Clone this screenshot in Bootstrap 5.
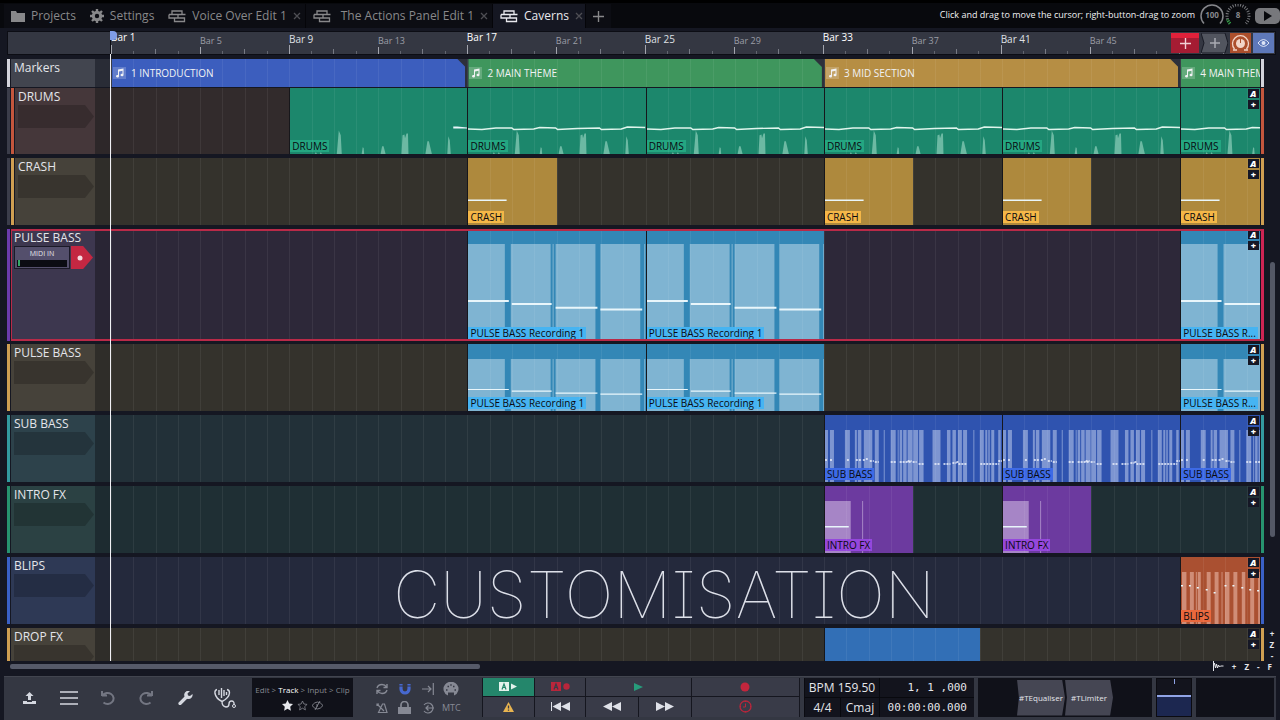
<!DOCTYPE html>
<html lang="en">
<head>
<meta charset="utf-8">
<meta name="viewport" content="width=device-width, initial-scale=1">
<title>Caverns</title>
<link href="https://cdn.jsdelivr.net/npm/bootstrap@5.3.0/dist/css/bootstrap.min.css" rel="stylesheet">
<style>
  :root { --bars: 51.57; --bar: calc(100% / var(--bars)); }
  body { background: #151722; color: #e4e5ea; font-family: "Open Sans", "Noto Sans", sans-serif; font-size: 12px; line-height: 16px; }
  button { color: inherit; font-family: inherit; }
  .btn { --bs-btn-color: inherit; --bs-btn-border-radius: 0; --bs-btn-font-size: 12px; --bs-btn-line-height: 16px; }
  svg { display: block; fill: none; stroke: currentColor; flex: none; }

  /* document tabs */
  .tabbar { background: #08090d; height: 28px; padding-top: 1px; border-top: 3px solid #000; }
  .doc-tab { color: #88888a; background: #0c0d13; border-right: 1px solid #050509; gap: 6px; font-size: 12px; height: 24px; padding: 0 7px; }
  .doc-tab.editor { padding-right: 4px; }
  .doc-tab.active { background: #151722; color: #e9e9ee; padding-right: 2px; }
  .doc-tab .btn { color: #4e4e54; }
  .hint { font-size: 9px; line-height: 22px; color: #f0f0f2; }
  .dial { width: 26px; }
  .dial text { font-size: 8px; font-weight: 700; fill: #87888c; stroke: none; text-anchor: middle; }

  /* ruler */
  .ruler { margin: 3px 4px 4px 7px; height: 24px; background: #343742; border: 1px solid #0c0d14; }
  .ruler-head { width: 103px; border-right: 1px solid #0c0d14; }
  .lane { display: grid; grid-template-columns: repeat(51, minmax(0, 1fr)) minmax(0, .57fr); grid-template-rows: 100%; }
  .scale-end { width: 17px; }
  .ticks { background:
      repeating-linear-gradient(90deg, #777a84 0 1px, transparent 1px calc(var(--bar) * 2)) 0 100% / 100% 5px no-repeat,
      repeating-linear-gradient(90deg, #62656f 0 1px, transparent 1px var(--bar)) 0 100% / 100% 3px no-repeat; }
  .ticks span { position: relative; white-space: nowrap; font-size: 9px; line-height: 12px; color: #9b9da6; padding-top: 3px; }
  .ticks span::after { content: ""; position: absolute; left: 0; bottom: 0; width: 1px; height: 7px; background: #a2a4ad; }
  .ticks .mid { font-size: 10px; color: #dfe0e5; padding-top: 1px; }
  .ticks .big { font-size: 10px; line-height: 10px; color: #fff; padding-top: 0; }
  .ticks .mid::after, .ticks .big::after { height: 9px; }
  .ruler-tools { right: 1px; top: 1px; gap: 2px; }
  .ruler-tools .btn { height: 20px; width: 21px; }
  .ruler-tools .add-track { background: linear-gradient(#e0213a 5px, #a51c33 5px); width: 28px; color: #f2d0d6; }

  /* tracks */
  .workspace, .tracks, .track-list { min-height: 0; }
  .tracks { margin-left: 7px; }
  .track { height: 67px; margin-bottom: 4px; flex: none; position: relative; }
  .track.markers { height: 28px; margin-bottom: 1px; }
  .track.drums { height: 66px; }
  .track.selected { height: 112px; margin-bottom: 3px; }
  .selected::after { content: ""; position: absolute; inset: 0 0 0 4px; border: 2px solid #b92a48; border-left-width: 1px; border-right: 3px solid #cf2554; pointer-events: none; z-index: 2; }
  .strip { width: 3px; margin-right: 1px; background: var(--tint); }
  .strip.group { background: #3b3d4a; }
  .strip.end { margin: 0 0 0 1px; }
  .track-head { width: 84px; background: var(--head); font-size: 12px; line-height: 17px; padding-left: 3px; white-space: nowrap; }
  .nested .track-head { width: 80px; }
  .side { width: 16px; background: color-mix(in srgb, var(--bed), #0b0c12 12%); border-right: 1px solid #12131a; }
  .slot { display: block; height: 23px; background: #0003; clip-path: polygon(0 0, calc(100% - 9px) 0, 100% 50%, calc(100% - 9px) 100%, 0 100%); border: 0; width: calc(100% - 1px); }
  .bed { background: var(--bed); position: relative; flex: 1; min-width: 0; overflow: hidden; }
  .bed::after { content: ""; position: absolute; inset: 0; pointer-events: none; background: repeating-linear-gradient(90deg, #ffffff10 0 1px, transparent 1px var(--bar)); }
  .clip { position: relative; overflow: hidden; background: var(--fill); color: var(--note); min-width: 0; border-left: 1px solid #07070c; }
  .clip > svg { position: absolute; left: 0; top: 15px; height: calc(100% - 15px); stroke: none; fill: currentColor; }
  .clip > b { position: absolute; left: 0; bottom: 2px; max-width: 100%; background: var(--name); color: #0a0a10; font-weight: 400; font-size: 10px; line-height: 12px; padding: 0 2px; white-space: nowrap; }
  .side-btns { top: 1px; right: 1px; z-index: 2; gap: 2px; }
  .side-btns .btn { background: #151725; color: #fff; width: 11px; height: 9px; font-size: 9px; line-height: 9px; font-weight: 800; }
  .section { background: var(--fill); clip-path: polygon(0 0, calc(100% - 8px) 0, 100% 8px, 100% 100%, 0 100%); margin: 0 2px 0 1px; min-width: 0; overflow: hidden; font-size: 10px; gap: 5px; padding-left: 1px; white-space: nowrap; color: #f1f2f4; }
  .section.open { clip-path: none; margin-right: 0; }
  .section svg { background: #ffffff33; fill: currentColor; }
  .playhead { left: 103px; top: -5px; bottom: 0; width: 1px; background: #f0f0f4; z-index: 3; }
  .playflag { left: 103px; top: -28px; width: 7px; height: 9px; background: #7f9ce8; border-radius: 0 4px 4px 0; z-index: 3; }

  .t-red { --tint: #c4563d; --head: #45373a; --bed: #322b2c; }
  .t-gold { --tint: #cf9f52; --head: #46423a; --bed: #34322c; }
  .t-violet { --tint: #6b3bac; --head: #3d374f; --bed: #2d2839; }
  .t-teal { --tint: #339a9f; --head: #2d424b; --bed: #223038; }
  .t-green { --tint: #27936f; --head: #2b4143; --bed: #1f2f34; }
  .t-blue { --tint: #3a60c6; --head: #2e3955; --bed: #24293c; }
  .t-grey { --tint: #d3d4dc; --head: #42454f; --bed: #2d303b; }
  .c-drums { --fill: #1c876c; --note: #6cb9a3; --name: #24a681; }
  .c-crash { --fill: #ae893d; --note: #fff5dc; --name: #f5b747; }
  .c-pulse { --fill: #3387b6; --note: #7fb4d2; --name: #46b4f2; }
  .c-sub { --fill: #2f53af; --note: #7d95d1; --name: #3d6ae6; }
  .c-intro { --fill: #6c3a9f; --note: #a685c6; --name: #9447dc; }
  .c-blips { --fill: #aa5031; --note: #d08d77; --name: #e9683d; }
  .c-drop { --fill: #326fb6; }
  .line { fill: #e9f6fb; }

  .midi-in { width: 56px; height: 23px; background: #544f6c; border: 1px solid #1b1a28; font-size: 7px; line-height: 13px; text-align: center; }
  .meter { height: 7px; margin: 0 2px; background: #0b0c13; border-left: 1px solid #0b0c13; }
  .meter i { display: block; width: 2px; height: 6px; background: #35a867; }
  .rec { width: 22px; height: 23px; margin-left: 1px; background: #c42742; clip-path: polygon(0 0, 55% 0, 100% 50%, 55% 100%, 0 100%); }
  .caption-title { font-family: Inter, Lato, sans-serif; font-weight: 100; font-feature-settings: "cv08"; font-size: 65px; line-height: 64px; color: #dcdfe8; bottom: 34px; z-index: 4; }

  .gutter { width: 18px; position: relative; font-size: 8px; line-height: 11px; font-weight: 700; text-align: center; }
  .v-thumb { width: 5px; background: #545866; border-radius: 3px; margin-left: 6px; }
  .h-scroll { height: 15px; padding-left: 10px; font-size: 8px; font-weight: 700; line-height: 11px; }
  .h-thumb { width: 37%; height: 5px; margin-top: 3px; background: #565a69; border-radius: 2px; }

  /* control bar */
  .controls { margin: 0 4px; height: 44px; background: #343742; border-top: 1px solid #42454f; padding: 1px 2px 3px 6px; }
  .controls .btn { display: flex; align-items: center; justify-content: center; border: 0; padding: 0; }
  .tools .btn { width: 39px; color: #d5d8e0; }
  .tools .dim { color: #737682; }
  .well { background: #101119; }
  .crumbs { width: 101px; font-size: 8px; line-height: 12px; color: #85878f; }
  .toggles { width: 129px; padding: 2px 19px 0 17px; grid-template-columns: repeat(4, 1fr); color: #868994; line-height: 16px; }
  .toggles .btn { --bs-btn-font-size: 9px; height: 18px; }
  .transport { width: 318px; grid-template-columns: 51fr 51fr 52fr 52fr 108fr; gap: 1px; background: #15161f; padding: 0 1px; }
  .transport .btn { background: #393b48; }
  .transport .on { background: #24866b; }
  .transport .play { grid-column: span 2; }
  .readout { width: 170px; border-left: 1px solid #0b0b11; gap: 1px; grid-template-columns: 35px 38px 1fr; background: #08090e; }
  .readout > div { background: #13141d; display: flex; align-items: center; justify-content: center; font-size: 12px; }
  .readout .tempo { grid-column: span 2; }
  .readout .clock { font-family: "DejaVu Sans Mono", monospace; font-size: 11px; justify-content: flex-end; padding-right: 7px; white-space: pre; }
  .controls .plugin { --bs-btn-font-size: 8px; background: #454653; width: 48px; height: 36px; clip-path: polygon(0 0, 94% 0, 100% 50%, 94% 100%, 0 100%, 4% 50%); }
  .fader { width: 36px; background: linear-gradient(#13141d 16px, #90a4e6 16px 18px, #1c2750 18px); border: 1px solid #0b0b11; }
  .fader span { width: 1px; height: 5px; background: #90a4e6; }
  .meter-out { width: 78px; }
</style>
</head>
<body class="d-flex flex-column vh-100 overflow-hidden">

<svg width="0" height="0" class="position-absolute" aria-hidden="true"><defs>
  <g id="n-spikes"><path d="M47 52L49 28L51 33L52 52ZM72 52L73 45L74 46L74.500 52ZM91 52L92.500 44L94 44L96 52ZM112 52L113 33L115 32L115.500 36L117 31L118.500 31L119 52ZM136 52L138 39L139.500 39L142.500 52ZM158 52L159 34L160.500 38L161.500 52ZM25 52l1-2l1 2zM30 52l1-2l1 2z"/></g>
  <g id="n-lead"><use href="#n-spikes"/><path class="line" d="M164 24h4l10 1v1h-14z"/></g>
  <g id="n-drums"><use href="#n-spikes"/><path d="M0 26.500L14 27L28 25.500L44 25.500L46 27L66 26.500L72 25L88 25.500L90 27L110 26L132 25.500L134 27L154 26.500L160 24.500L178 25" fill="none" stroke="#dff5ec" stroke-width="1.500"/></g>
  <g id="n-pulse"><path d="M0 0h37v52H0zM43 0h40v52H43zM85 0h1v52h-1zM88 0h40v52H88zM133 0h40v52h-40zM177 0h1v52h-1z"/><path class="line" d="M0 30h41v1.100H0zM44 31.600h40v1.100H44zM88 33.600h42v1.100H88zM133 34.600h42v1.100h-42z"/></g>
  <g id="n-sub"><path d="M0 0h3v52H0zM5 0h4v52H5zM20 0h5v52h-5zM30 0h2v52h-2zM33 0h3.500v52H33zM39 0h8.500v52H39zM50 0h4v52h-4zM59 0h1v52h-1zM66 0h5v52h-5zM73 0h1v52h-1zM75 0h2.500v52H75zM78.500 0h3.500v52h-3.500zM83 0h5v52h-5zM88.700 0h4.800v52h-4.800zM94.500 0h4.500v52h-4.500zM108 0h8v52h-8zM122.500 0h3.500v52h-3.500zM128 0h3.500v52H128zM133.500 0h4v52h-4zM138.700 0h4v52h-4zM149 0h1v52h-1zM155.500 0h4v52h-4zM161 0h2v52h-2zM164 0h1.500v52H164zM167 0h3v52h-3zM174 0h2.500v52H174z"/>
    <path stroke="#eef2fd" stroke-width="1.600" stroke-dasharray="2 1" d="M0 30h2M5 30h3M22 30h3M31 30h6M38 30h3M41 29h3M45 31h4M50 32h4M66 32h5M75 32h12M83 31h4M88 32h4M94 34h5M110 34h5M119 34h7M128 33h4M132 32h3M134 34h9M156 34h14M171 34h4M174 31h4"/></g>
  <g id="n-intro"><path d="M0 0h26v52H0zM37.500 0h1v52h-1z"/><path class="line" d="M0 25h24v1.500H0z"/></g>
  <g id="n-crash"><path class="line" d="M0 26.500h39v1.500H0z"/></g>
  <g id="n-blips"><path d="M1 0h4.500v52H1zM9 0h4v52H9zM15 0h1v52h-1zM17 0h3v52h-3zM26 0h4v52h-4zM34 0h4v52h-4zM41 0h1v52h-1zM44.500 0h4.500v52h-4.500zM53 0h4v52h-4zM61.500 0h3.500v52h-3.500zM70 0h4v52h-4zM78 0h2v52h-2z"/><path class="line" d="M0 13h2v1.500H0zM8 13h2v1.500H8zM16 15h2v1.500h-2zM25 17h2v1.500h-2zM33 20h2v1.500h-2zM44 13h2v1.500h-2zM52 13h2v1.500h-2zM61 15h2v1.500h-2zM69 17h2v1.500h-2zM77 18h2v1.500h-2z"/></g>
  <symbol id="i-song" viewBox="0 0 13 12"><path d="M5 2.500L10.500 1.500V8a1.500 1.300 0 1 1-1-1.200V3.700L6 4.400V9.200A1.500 1.300 0 1 1 5 8z" stroke="none"/></symbol>
  <symbol id="i-edit" viewBox="0 0 18 13"><path d="M4 1h10v3.500H4zM1 4.500h3M10 4.500V8M1 4.500V8h10M6.500 8v3.500h10V8zM14 4.500h3.500" stroke-width="1.300"/></symbol>
  <symbol id="i-x" viewBox="0 0 8 8"><path d="M1 1l6 6M7 1L1 7" stroke-width="1.300"/></symbol>
  <symbol id="i-plus" viewBox="0 0 12 12"><path d="M6 0v12M0 6h12" stroke-width="1.500"/></symbol>
</defs></svg>

<nav class="tabbar d-flex align-items-start flex-shrink-0 ps-1" aria-label="Documents">
  <button class="btn doc-tab d-flex align-items-center border-0"><svg width="14" height="12" viewBox="0 0 14 12"><path d="M0 1h5l1 2h8v9H0z" fill="currentColor" stroke="none"/></svg>Projects</button>
  <button class="btn doc-tab d-flex align-items-center border-0"><svg width="14" height="14" viewBox="0 0 14 14"><circle cx="7" cy="7" r="3.700" stroke-width="3"/><path d="M7 0v3M7 11v3M0 7h3M11 7h3M2 2l2 2M10 10l2 2M12 2l-2 2M4 10l-2 2" stroke-width="2.400"/></svg>Settings</button>
  <div class="doc-tab editor d-flex align-items-center"><svg width="18" height="13"><use href="#i-edit"/></svg>Voice Over Edit 1<button class="btn border-0 p-0" aria-label="Close"><svg width="8" height="8"><use href="#i-x"/></svg></button></div>
  <div class="doc-tab editor d-flex align-items-center"><svg width="18" height="13"><use href="#i-edit"/></svg><span class="ps-1">The Actions Panel Edit 1</span><button class="btn border-0 p-0" aria-label="Close"><svg width="8" height="8"><use href="#i-x"/></svg></button></div>
  <div class="doc-tab editor active d-flex align-items-center"><svg width="18" height="13"><use href="#i-edit"/></svg>Caverns<button class="btn border-0 p-0" aria-label="Close"><svg width="8" height="8"><use href="#i-x"/></svg></button></div>
  <button class="btn doc-tab border-0" aria-label="New tab"><svg width="11" height="11"><use href="#i-plus"/></svg></button>
  <span class="hint ms-auto me-1">Click and drag to move the cursor; right-button-drag to zoom</span>
  <svg class="dial" height="24" viewBox="0 0 26 24"><path d="M5 19.500a11 11 0 1 1 16 0" stroke="#85868a" stroke-width="1.500"/><text x="13" y="14">100</text></svg>
  <svg class="dial" height="24" viewBox="0 0 26 24"><path d="M5 19.500a11 11 0 1 1 16 0" stroke="#77787c" stroke-width="3" stroke-dasharray="1 1.500"/><path d="M5 19.500a11 11 0 0 1-2.500-4" stroke="#20a036" stroke-width="3" stroke-dasharray="1 1"/><text x="13" y="14">8</text></svg>
  <button class="btn border-0 p-0 ms-1 mt-1" aria-label="Watch"><svg width="25" height="17" viewBox="0 0 25 17"><rect width="25" height="16" rx="5" fill="#77787c" stroke="none"/><path d="M9 3l8 5l-8 5z" fill="#08090d" stroke="none"/></svg></button>
</nav>

<div class="ruler d-flex position-relative flex-shrink-0">
  <div class="ruler-head"></div>
  <div class="lane ticks flex-grow-1" id="ticks"></div>
  <div class="scale-end"></div>
  <div class="ruler-tools position-absolute d-flex">
    <button class="btn add-track border-0 p-0 d-flex justify-content-center align-items-end pb-1" aria-label="Add track"><svg width="11" height="11"><use href="#i-plus"/></svg></button>
    <button class="btn border-0 p-0 w-auto" aria-label="Add plugin"><svg width="27" height="20" viewBox="0 0 27 20"><path d="M0 0h24l3 10l-3 10H0l3-10z" fill="#52555f" stroke="#191b25"/><path d="M14 5v10M9 10h10" stroke="#a9abb3" stroke-width="1.500"/></svg></button>
    <button class="btn border-0 p-0" aria-label="Plugins"><svg width="21" height="20" viewBox="0 0 21 20"><rect width="21" height="20" fill="#ac4f2c" stroke="none"/><circle cx="10.500" cy="10.500" r="4.500" fill="#f2d5c8" stroke="none"/><path d="M4.500 16a8 8 0 1 1 12 0M3 17h4M14 17h4" stroke="#f2d5c8" stroke-width="1.300"/><path d="M10.500 6v4" stroke="#ac4f2c"/></svg></button>
    <button class="btn border-0 p-0" aria-label="Visibility"><svg width="21" height="20" viewBox="0 0 21 20"><rect width="21" height="20" fill="#5e78b9" stroke="none"/><path d="M5 10q5.500-7 11 0q-5.500 7-11 0z" stroke="#dde4f6"/><circle cx="10.500" cy="10" r="2" fill="#dde4f6" stroke="none"/></svg></button>
  </div>
</div>

<main class="workspace d-flex flex-grow-1 position-relative">
  <div class="tracks d-flex flex-column flex-grow-1 position-relative">
    <div class="playflag position-absolute"></div><div class="playhead position-absolute"></div>
    <div class="track-list d-flex flex-column flex-grow-1 overflow-hidden" id="tracks">
      <section class="track markers t-grey d-flex">
        <div class="strip"></div><div class="track-head">Markers</div><div class="side"></div>
        <div class="bed lane">
          <div class="section d-flex align-items-center" style="grid-column:1/span 16;--fill:#3c5ebe"><svg width="13" height="12"><use href="#i-song"/></svg>1 INTRODUCTION</div>
          <div class="section d-flex align-items-center" style="grid-column:17/span 16;--fill:#3f965d"><svg width="13" height="12"><use href="#i-song"/></svg>2 MAIN THEME</div>
          <div class="section d-flex align-items-center" style="grid-column:33/span 16;--fill:#b68e44"><svg width="13" height="12"><use href="#i-song"/></svg>3 MID SECTION</div>
          <div class="section open d-flex align-items-center" style="grid-column:49/-1;--fill:#3f965d"><svg width="13" height="12"><use href="#i-song"/></svg>4 MAIN THEME</div>
        </div><div class="strip end"></div>
      </section>
    </div>
  </div>
  <div class="gutter d-flex flex-column">
    <div style="flex:203"></div><div class="v-thumb" style="flex:274"></div><div style="flex:91"></div>
    <span>+</span><span>Z</span><span>-</span>
  </div>
  <div class="caption-title position-absolute start-50 translate-middle-x ps-5">CUSTOMISATION</div>
</main>

<div class="h-scroll d-flex flex-shrink-0">
  <div class="h-thumb"></div>
  <div class="ms-auto d-flex gap-2 pe-2"><svg width="11" height="10" viewBox="0 0 11 10"><path d="M.5 0v10M.5 5l1-3l1 5l1-4l1 4l1-3l1 2l1-1h3"/></svg><span>+</span><span>Z</span><span>-</span><span>F</span></div>
</div>

<footer class="controls d-flex flex-shrink-0">
  <div class="tools d-flex align-items-stretch">
    <button class="btn" aria-label="Export"><svg width="13" height="12" viewBox="0 0 13 12"><path d="M6.500 0l4 4H8v4H5V4H2.500zM0 9h4v1h5V9h4v3H0z" fill="currentColor" stroke="none"/></svg></button>
    <button class="btn" aria-label="Menu"><svg width="18" height="14" viewBox="0 0 18 14"><path d="M0 1h18M0 7h18M0 13h18" stroke-width="1.500"/></svg></button>
    <button class="btn dim" aria-label="Undo"><svg width="15" height="14" viewBox="0 0 15 14"><path d="M2 4.500h5M2 0v5M2.500 4.500a6 5.500 0 1 1 1 7" stroke-width="2"/></svg></button>
    <button class="btn dim" aria-label="Redo"><svg width="15" height="14" viewBox="0 0 15 14"><path d="M13 4.500H8M13 0v5M12.500 4.500a6 5.500 0 1 0-1 7" stroke-width="2"/></svg></button>
    <button class="btn" aria-label="Tools"><svg width="15" height="14" viewBox="0 0 15 14"><path d="M2 12.500l6-6" stroke-width="3.200" stroke-linecap="round"/><path d="M12 0L9.500 2.500l.5 2l2 .5L14.500 3a4.200 4.200 0 1 1-2.500-3z" fill="currentColor" stroke="none"/></svg></button>
    <button class="btn" aria-label="Health"><svg width="22" height="20" viewBox="0 0 22 20"><path d="M3 1.500Q.5 2 1 5.500Q2 10.500 8 13.500Q15 10 15.500 5Q15.500 2 13 1.500M5 2v5M7.500 0v10M10 2v6M12.500 4v3M8 13.500q0 5 4 5.500q3 0 3-3t2.500-3q3 0 2.500 4" stroke-width="1.400"/><circle cx="20" cy="18" r="1.500"/></svg></button>
  </div>
  <div class="crumbs well d-flex flex-column justify-content-center ms-2">
    <div class="text-center text-nowrap pb-1">Edit &gt; <span class="text-white">Track</span> &gt; Input &gt; Clip</div>
    <div class="d-flex justify-content-center align-items-center gap-1"><svg width="11" height="11" viewBox="0 0 11 11"><path d="M5.500 0l1.700 3.600l3.800.5l-2.800 2.700l.7 4l-3.400-2l-3.400 2l.7-4L0 4.100l3.800-.5z" fill="#e7e8ec" stroke="none"/></svg><svg width="11" height="11" viewBox="0 0 11 11"><path d="M5.500 1l1.400 3l3.200.4l-2.400 2.200l.7 3.300l-2.900-1.700l-2.900 1.700l.7-3.300L.9 4.400L4.100 4z" stroke-width=".8"/></svg><svg width="11" height="9" viewBox="0 0 11 9"><path d="M0 4.500q5.500-7 11 0q-5.500 7-11 0zM3 9l5-9M5 3v3" stroke-width=".9"/></svg></div>
  </div>
  <div class="toggles d-grid">
    <button class="btn" aria-label="Loop"><svg width="12" height="12" viewBox="0 0 12 12"><path d="M1 5q1-3.500 5-3.500q3 0 4.500 2.500M11 1v3.500H7.500M11 7q-1 3.500-5 3.500Q3 10.500 1.500 8M1 11V7.500h3.500" stroke-width="1.400"/></svg></button>
    <button class="btn" aria-label="Snap"><svg width="12" height="12" viewBox="0 0 12 12"><path d="M2 1v5a4 4 0 0 0 8 0V1" stroke="#4668cf" stroke-width="3.200"/><path d="M0 3h4M8 3h4" stroke="#343742"/></svg></button>
    <button class="btn" aria-label="Punch"><svg width="12" height="12" viewBox="0 0 12 12"><path d="M0 6h9M6 3l3 3l-3 3M11.300 0v12" stroke-width="1.200"/></svg></button>
    <button class="btn" aria-label="MIDI"><svg width="16" height="14" viewBox="0 0 16 14"><path d="M5 13.500a7.500 7.200 0 1 1 6 0v-3H5z" fill="currentColor" stroke="none"/><path d="M3 8h1.500M4.500 4.500H6M7.300 3h1.400M10 4.500h1.500M11.500 8H13" stroke="#343742" stroke-width="1.600"/></svg></button>
    <button class="btn" aria-label="Click"><svg width="12" height="12" viewBox="0 0 12 12"><path d="M2.500 10.500L6.500 2h2l2.500 8.500zM1 2l7 7M1 4V2h2" stroke-width="1.200"/></svg></button>
    <button class="btn" aria-label="Lock"><svg width="13" height="13" viewBox="0 0 13 13"><path d="M0 6h13v7H0z" fill="currentColor" stroke="none"/><path d="M3 6V4a3.500 3.500 0 0 1 7 0v2" stroke-width="1.700"/></svg></button>
    <button class="btn" aria-label="Scroll"><svg width="12" height="12" viewBox="0 0 12 12"><path d="M2 3a5 5 0 1 1 0 6M4 6h8M6.500 3.500L4 6l2.500 2.500" stroke-width="1.200"/></svg></button>
    <button class="btn">MTC</button>
  </div>
  <div class="transport d-grid">
    <button class="btn on" aria-label="Automation read"><svg width="18" height="9" viewBox="0 0 18 9"><path d="M0 0h10v9H0zM12 1.500l6 3l-6 3z" fill="#e3f2ec" stroke="none"/><path d="M3 7.500L5 2l2 5.500M3.500 5.500h3" stroke="#24866b" stroke-width="1.200"/></svg></button>
    <button class="btn" aria-label="Automation write"><svg width="19" height="9" viewBox="0 0 19 9"><path d="M0 0h10v9H0z" fill="#b9263b" stroke="none"/><circle cx="15.500" cy="4.500" r="3.200" fill="#b9263b" stroke="none"/><path d="M3 7.500L5 2l2 5.500M3.500 5.500h3" stroke="#393b48" stroke-width="1.200"/></svg></button>
    <button class="btn play" aria-label="Play"><svg width="9" height="8" viewBox="0 0 9 8"><path d="M0 0l9 4l-9 4z" fill="#279c7b" stroke="none"/></svg></button>
    <button class="btn" aria-label="Record"><svg width="10" height="10"><circle cx="5" cy="5" r="4.500" fill="#c3263d" stroke="none"/></svg></button>
    <button class="btn" aria-label="Panic"><svg width="11" height="10" viewBox="0 0 11 10"><path d="M5.500 0L11 10H0z" fill="#e8b450" stroke="none"/><path d="M5.500 3.500v3M5.500 7.500v1.200" stroke="#393b48" stroke-width="1.300"/></svg></button>
    <button class="btn" aria-label="To start"><svg width="19" height="9" viewBox="0 0 19 9"><path d="M0 0h1v9H0zM10 0v9L1.500 4.500zM19 0v9l-9-4.500z" fill="#dfe1e8" stroke="none"/></svg></button>
    <button class="btn" aria-label="Rewind"><svg width="18" height="9" viewBox="0 0 18 9"><path d="M9 0v9L0 4.500zM18 0v9L9 4.500z" fill="#dfe1e8" stroke="none"/></svg></button>
    <button class="btn" aria-label="Forward"><svg width="18" height="9" viewBox="0 0 18 9"><path d="M0 0v9l9-4.500zM9 0v9l9-4.500z" fill="#dfe1e8" stroke="none"/></svg></button>
    <button class="btn" aria-label="Retrospective record"><svg width="13" height="13" viewBox="0 0 13 13"><circle cx="6.500" cy="6.500" r="5.500" stroke="#b9263b" stroke-width="1.300"/><path d="M6.500 3.500v3.500H4M6.500 1v1M12 6.500h-1M2 6.500H1M6.500 12v-1" stroke="#b9263b"/></svg></button>
  </div>
  <div class="readout d-grid ms-1">
    <div class="tempo">BPM 159.50</div><div class="clock">1, 1 ,000</div>
    <div>4/4</div><div>Cmaj</div><div class="clock">00:00:00.000</div>
  </div>
  <div class="well flex-grow-1 d-flex justify-content-center align-items-center mx-1">
    <button class="btn plugin">#TEqualiser</button><button class="btn plugin">#TLimiter</button>
  </div>
  <div class="fader position-relative"><span class="position-absolute start-50 top-0"></span></div>
  <div class="well meter-out ms-1"></div>
</footer>

<script src="https://cdn.jsdelivr.net/npm/bootstrap@5.3.0/dist/js/bootstrap.bundle.min.js"></script>
<script>
  const END = 52.57; // last visible position, in bars

  // clips: [first bar, length in bars, notes (defaults to the track's own)]
  const tracks = [
    { name: 'DRUMS', cls: 'drums nested t-red', kind: 'drums', clips: [[9, 8, 'lead'], [17, 8], [25, 8], [33, 8], [41, 8], [49, 8]] },
    { name: 'CRASH', cls: 'nested t-gold', kind: 'crash', clips: [[17, 4], [33, 4], [41, 4], [49, 4]] },
    { name: 'PULSE BASS', cls: 'selected t-violet', kind: 'pulse', label: 'PULSE BASS Recording 1', clips: [[17, 8], [25, 8], [49, 8]] },
    { name: 'PULSE BASS', cls: 't-gold', kind: 'pulse', label: 'PULSE BASS Recording 1', clips: [[17, 8], [25, 8], [49, 8]] },
    { name: 'SUB BASS', cls: 't-teal', kind: 'sub', clips: [[33, 8], [41, 8], [49, 8]] },
    { name: 'INTRO FX', cls: 't-green', kind: 'intro', clips: [[33, 4], [41, 4]] },
    { name: 'BLIPS', cls: 't-blue', kind: 'blips', clips: [[49, 8]] },
    { name: 'DROP FX', cls: 't-gold', kind: 'drop', clips: [[33, 7]] },
  ];

  const ticks = document.getElementById('ticks');
  for (let bar = 1; bar < 49; bar += 4) {
    const size = bar % 16 === 1 ? 'big' : bar % 8 === 1 ? 'mid' : '';
    ticks.insertAdjacentHTML('beforeend', `<span class="${size}" style="grid-column:${bar}/span 4">Bar ${bar}</span>`);
  }

  const input = '<button class="slot" aria-label="Input"></button>';
  const armed = `<div class="d-flex"><div class="midi-in">MIDI IN<div class="meter"><i></i></div></div>
    <button class="btn rec border-0 p-0 d-flex align-items-center justify-content-center pe-1" aria-label="Arm recording"><svg width="6" height="6"><circle cx="3" cy="3" r="2.500" fill="#f6dbe1" stroke="none"/></svg></button></div>`;

  function clip(track, [start, length, notes = track.kind]) {
    const cut = start + length > END;
    const shown = cut ? END - start : length;
    let text = track.kind === 'drop' ? '' : track.label || track.name;
    if (cut && text.length > 14) text = text.slice(0, 12) + '...';
    return `<div class="clip" style="grid-column:${start}/${cut ? -1 : 'span ' + length}">
      <svg viewBox="0 0 ${length * 22.25} 52" preserveAspectRatio="none" style="width:${length / shown * 100}%"><use href="#n-${notes}"/></svg>
      ${text && `<b>${text}</b>`}</div>`;
  }

  for (const t of tracks) {
    document.getElementById('tracks').insertAdjacentHTML('beforeend', `
      <section class="track ${t.cls} d-flex">
        ${t.cls.includes('nested') ? '<div class="strip group"></div>' : ''}<div class="strip"></div>
        <div class="track-head">${t.name}${t.cls.includes('selected') ? armed : input}</div><div class="side"></div>
        <div class="bed lane c-${t.kind}">${t.clips.map(c => clip(t, c)).join('')}
          <div class="side-btns position-absolute d-flex flex-column"><button class="btn border-0 p-0 fst-italic">A</button><button class="btn border-0 p-0">+</button></div>
        </div><div class="strip end"></div>
      </section>`);
  }
</script>
</body>
</html>
